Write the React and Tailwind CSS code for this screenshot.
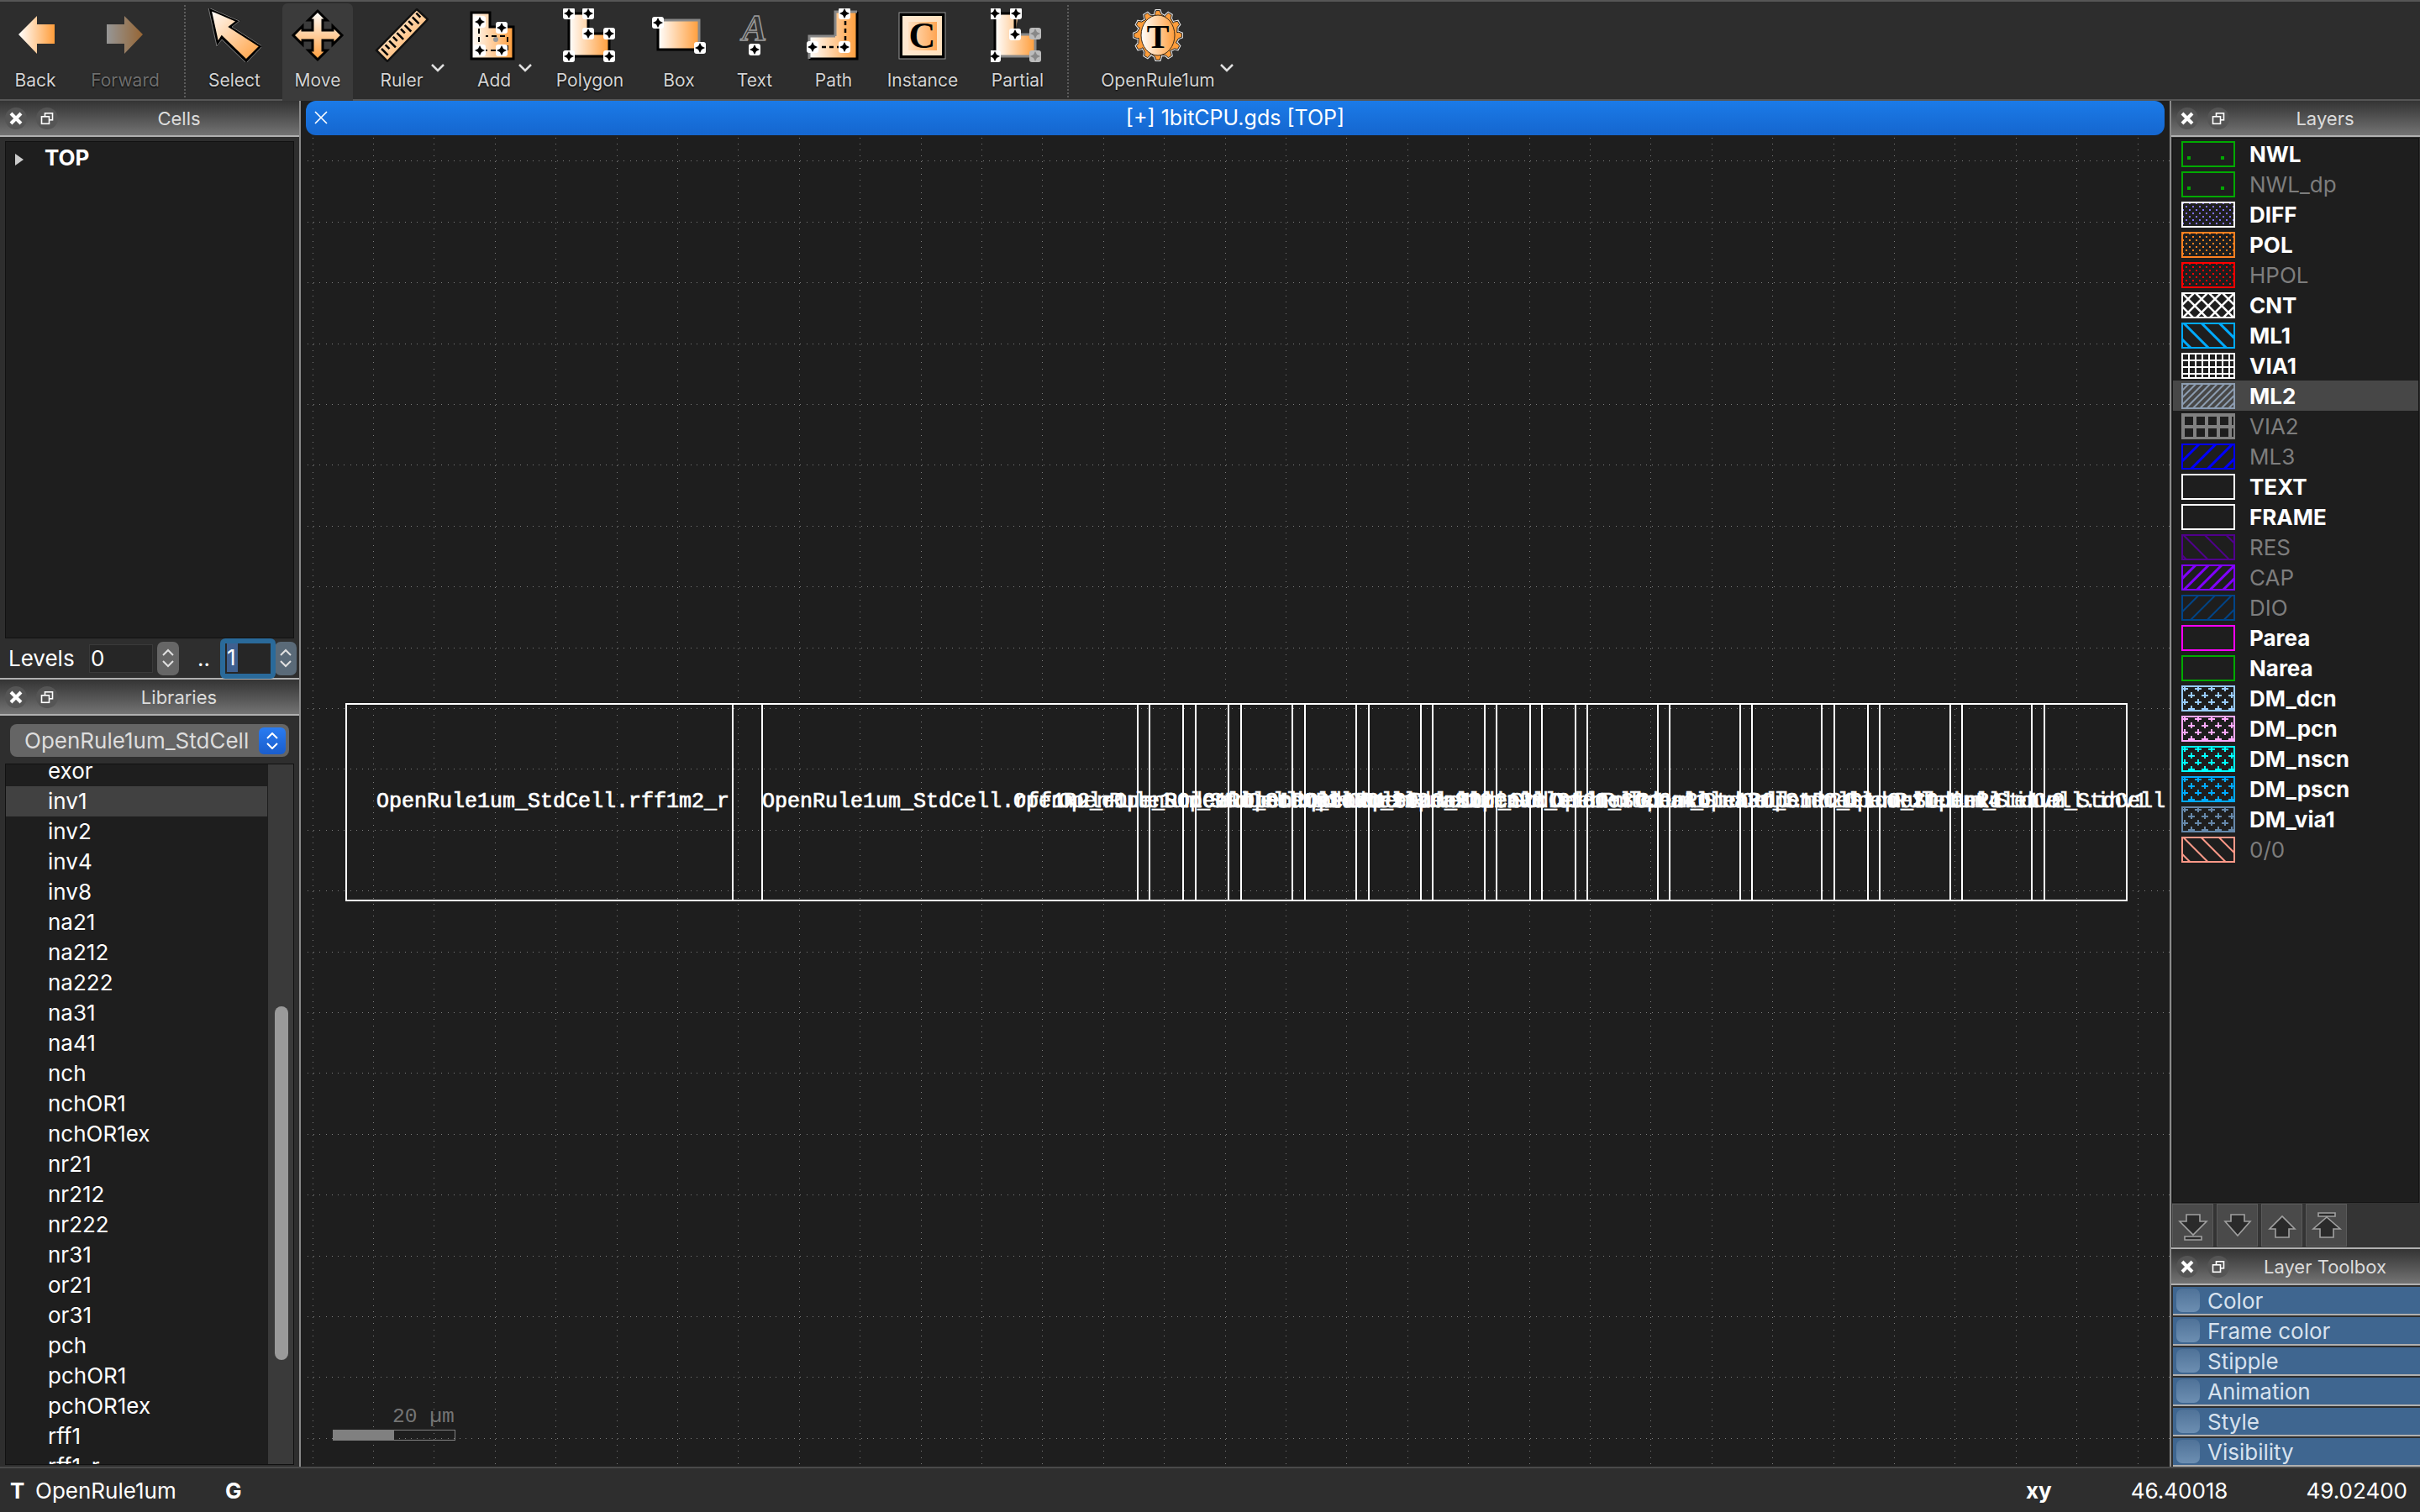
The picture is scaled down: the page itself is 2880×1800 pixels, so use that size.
import React from 'react';

const SANS = '[font-family:Inter,sans-serif]';

const tools = [
  { name: 'Back', w: 'w-[84px]', icon: 'back' },
  { name: 'Forward', w: 'w-[130px]', icon: 'forward', dim: true },
  { sep: 'mx-[5px]' },
  { name: 'Select', w: 'w-[106px]', icon: 'select' },
  { name: 'Move', w: 'w-[84px] ml-[4px]', icon: 'move', active: true },
  { name: 'Ruler', w: 'w-[116px]', icon: 'ruler', menu: true },
  { name: 'Add', w: 'w-[104px]', icon: 'add', menu: true },
  { name: 'Polygon', w: 'w-[124px]', icon: 'polygon' },
  { name: 'Box', w: 'w-[88px]', icon: 'box' },
  { name: 'Text', w: 'w-[92px]', icon: 'text' },
  { name: 'Path', w: 'w-[96px]', icon: 'path' },
  { name: 'Instance', w: 'w-[116px]', icon: 'instance' },
  { name: 'Partial', w: 'w-[110px]', icon: 'partial' },
  { sep: 'mx-[4px]' },
  { name: 'OpenRule1um', w: 'w-[204px]', icon: 'gear', menu: true, menuClass: 'right-[11px]' },
];

const cellNames = ['exor', 'inv1', 'inv2', 'inv4', 'inv8', 'na21', 'na212', 'na222', 'na31', 'na41', 'nch', 'nchOR1', 'nchOR1ex', 'nr21', 'nr212', 'nr222', 'nr31', 'or21', 'or31', 'pch', 'pchOR1', 'pchOR1ex', 'rff1', 'rff1_r'];

const layers = [
  { name: 'NWL', kind: 'corner', color: '#00aa00' },
  { name: 'NWL_dp', kind: 'corner', color: '#00aa00', dim: true },
  { name: 'DIFF', kind: 'dots', color: '#ffffff', fg: '#8070ff' },
  { name: 'POL', kind: 'dots', color: '#ff8020' },
  { name: 'HPOL', kind: 'dots', color: '#ff0000', dim: true },
  { name: 'CNT', kind: 'cross', color: '#ffffff' },
  { name: 'ML1', kind: 'down', color: '#00aaff', s: 15, t: 3 },
  { name: 'VIA1', kind: 'grid', color: '#ffffff', s: 8, t: 2 },
  { name: 'ML2', kind: 'up', color: '#8c9cb0', s: 6, t: 2, selected: true },
  { name: 'VIA2', kind: 'grid', color: '#808080', s: 14, t: 4, dim: true },
  { name: 'ML3', kind: 'up', color: '#0000ff', s: 14, t: 3, dim: true },
  { name: 'TEXT', kind: 'none', color: '#ffffff' },
  { name: 'FRAME', kind: 'none', color: '#ffffff' },
  { name: 'RES', kind: 'down', color: '#50008c', s: 18, t: 2, dim: true },
  { name: 'CAP', kind: 'up', color: '#8000ff', s: 11, t: 3, dim: true },
  { name: 'DIO', kind: 'up', color: '#004488', s: 14, t: 2, dim: true },
  { name: 'Parea', kind: 'none', color: '#ff00ff' },
  { name: 'Narea', kind: 'none', color: '#00aa00' },
  { name: 'DM_dcn', kind: 'plus', color: '#99ccff' },
  { name: 'DM_pcn', kind: 'plus', color: '#ffaaff' },
  { name: 'DM_nscn', kind: 'plus', color: '#00ffff' },
  { name: 'DM_pscn', kind: 'plus', color: '#00aaff' },
  { name: 'DM_via1', kind: 'plus', color: '#6688aa' },
  { name: '0/0', kind: 'down', color: '#ff9988', s: 15, t: 2, dim: true },
];

const toolbox = ['Color', 'Frame color', 'Stipple', 'Animation', 'Style', 'Visibility'];

// cell frames in the layout view, page coordinates
const cellEdges = [412, 872, 907, 1354, 1368, 1408, 1423, 1462, 1477, 1538, 1553, 1614, 1629, 1691, 1705, 1767, 1781, 1821, 1835, 1875, 1889, 1973, 1987, 2071, 2085, 2168, 2183, 2223, 2237, 2321, 2335, 2418, 2433, 2531];
const labels = [
  [448, 'rff1m2_r'], [907, 'rff1m2_r'], [1206, 'nchOR1ex'], [1260, 'pchOR1'], [1326, 'nr212'], [1401, 'na222'], [1478, 'inv8'],
  [1554, 'or31'], [1618, 'nr31'], [1673, 'na41'], [1749, 'na31'], [1847, 'nr21'], [1945, 'or21'], [2021, 'inv4'], [2097, 'inv2'], [2195, 'inv1'],
];

const gridDots = (() => {
  let d = '';
  const P = 72.4;
  for (let row = -9; row < 14; row++) {
    const y = Math.round(843 + row * P);
    for (let x = 366; x < 2582; x += P / 10) d += `M${Math.round(x)} ${y}h1v1h-1z`;
  }
  for (let col = -1; col < 30; col++) {
    const x = Math.round(444 + col * P);
    for (let y = 163.5; y < 1746; y += P / 10) d += `M${x} ${Math.round(y)}h1v1h-1z`;
  }
  return d;
})();

const gearPoints = (() => {
  const pts = [];
  for (let i = 0; i < 12; i++) {
    const a = (i / 12) * Math.PI * 2;
    const da = Math.PI / 12;
    [[-da * 0.55, 27], [-da * 0.3, 31], [da * 0.3, 31], [da * 0.55, 27], [da * 1.45, 25]].forEach(([o, r]) => {
      pts.push(`${(32 + Math.sin(a + o) * r * 0.92).toFixed(1)},${(32 - Math.cos(a + o) * r * 0.95).toFixed(1)}`);
    });
  }
  return pts.join(' ');
})();

const Handle = ({ x, y, gray }) => (
  <g transform={`translate(${x} ${y})`}>
    <rect x="-7" y="-7" width="14" height="14" rx="3" fill={gray ? '#bbbbbb' : '#ffffff'} />
    <path d="M0 -6 L2 -2 L6 0 L2 2 L0 6 L-2 2 L-6 0 L-2 -2 Z" fill={gray ? '#888888' : '#000000'} />
  </g>
);

const ToolIcon = ({ kind }) => {
  const base = { width: 64, height: 64, viewBox: '0 0 64 64' };
  switch (kind) {
    case 'back':
      return <svg {...base}><path d="M12 31 L34 9 L34 19 L55 19 L55 42 L34 42 L34 54 Z" fill="url(#toolH)" /></svg>;
    case 'forward':
      return <svg {...base} className="opacity-50"><path d="M53 31 L31 9 L31 19 L10 19 L10 42 L31 42 L31 54 Z" fill="url(#toolHR)" /></svg>;
    case 'select':
      return (
        <svg {...base}>
          <path d="M3 1 L36 15 L27 22 L63 45 L46 62 L17 34 L12 42 Z" fill="url(#toolD)" stroke="#000" strokeWidth="3" />
          <path d="M1 -1 L38 15 L29 22 L65 45 L46 65 L17 37 L11 45 Z" fill="none" stroke="#777" strokeWidth="1" />
        </svg>
      );
    case 'move':
      return (
        <svg {...base}>
          <path d="M32 3 L43 14 L38 14 L38 26 L50 26 L50 21 L61 32 L50 43 L50 38 L38 38 L38 50 L43 50 L32 61 L21 50 L26 50 L26 38 L14 38 L14 43 L3 32 L14 21 L14 26 L26 26 L26 14 L21 14 Z" fill="url(#toolV)" stroke="#000" strokeWidth="3" />
        </svg>
      );
    case 'ruler':
      return (
        <svg {...base}>
          <path d="M50 1 L63 13 L15 63 L2 50 Z" fill="url(#toolD)" stroke="#111" strokeWidth="2.5" />
          {[0, 1, 2, 3, 4, 5, 6, 7, 8, 9].map((i) => {
            const x = 8 + i * 4.6;
            const y = 48 - i * 4.7;
            const len = i % 2 ? 7 : 11;
            return <line key={i} x1={x} y1={y} x2={x + len * 0.7} y2={y + len * 0.7} stroke="#000" strokeWidth="2.5" />;
          })}
        </svg>
      );
    case 'add':
      return (
        <svg {...base}>
          <path d="M5 5 L27 5 L27 22 L55 22 L55 60 L5 60 Z" fill="url(#toolH)" stroke="#000" strokeWidth="3" />
          <path d="M14 14 L14 50 L48 50 L48 33 L22 33" fill="none" stroke="#000" strokeWidth="2" strokeDasharray="6 4" />
          <circle cx="34" cy="37" r="3" fill="#999" />
          <Handle x={15} y={16} />
          <Handle x={41} y={23} />
          <Handle x={15} y={50} />
          <Handle x={41} y={50} />
        </svg>
      );
    case 'polygon':
      return (
        <svg {...base}>
          <path d="M7 6 L30 6 L30 30 L55 30 L55 57 L7 57 Z" fill="url(#toolH)" stroke="#000" strokeWidth="3" />
          <Handle x={7} y={6} /><Handle x={30} y={6} /><Handle x={30} y={30} /><Handle x={55} y={30} /><Handle x={7} y={57} /><Handle x={55} y={57} />
        </svg>
      );
    case 'box':
      return (
        <svg {...base}>
          <rect x="7" y="14" width="49" height="35" fill="url(#toolH)" />
          <path d="M7 14 H56 V49" fill="none" stroke="#888" strokeWidth="3" />
          <path d="M7 14 V49 H56" fill="none" stroke="#000" strokeWidth="3" />
          <Handle x={7} y={17} /><Handle x={57} y={47} />
        </svg>
      );
    case 'text':
      return (
        <svg {...base}>
          <text x="32" y="38" textAnchor="middle" fontFamily="Liberation Serif, serif" fontStyle="italic" fontWeight="700" fontSize="44" fill="#333" stroke="#999" strokeWidth="1.5">A</text>
          <Handle x={32} y={49} />
        </svg>
      );
    case 'path':
      return (
        <svg {...base}>
          <path d="M34 4 L60 4 L60 60 L3 60 L3 33 L34 33 Z" fill="url(#toolH)" />
          <path d="M60 4 V60 H3" fill="none" stroke="#000" strokeWidth="3" />
          <path d="M34 33 V4 H60 M3 60 V33 H34" fill="none" stroke="#888" strokeWidth="3" />
          <path d="M46 6 V46 H7" fill="none" stroke="#000" strokeWidth="2.5" strokeDasharray="5 4" />
          <Handle x={45} y={6} /><Handle x={45} y={46} /><Handle x={7} y={46} />
        </svg>
      );
    case 'instance':
      return (
        <svg {...base}>
          <rect x="4" y="5" width="55" height="55" fill="#000" stroke="#999" strokeWidth="1" />
          <rect x="8" y="9" width="47" height="47" fill="url(#toolPale)" />
          <rect x="15" y="16" width="34" height="34" fill="url(#toolInner)" />
          <text x="31.5" y="47" textAnchor="middle" fontFamily="Liberation Serif, serif" fontWeight="700" fontSize="44" fill="#000">C</text>
        </svg>
      );
    case 'partial':
      return (
        <svg {...base}>
          <path d="M5 6 L33 6 L29 31 L53 31 L53 57 L5 57 Z" fill="url(#toolH)" />
          <path d="M5 57 V6 H29 V31" fill="none" stroke="#000" strokeWidth="3" />
          <path d="M29 31 H53 V57 H5" fill="none" stroke="#888" strokeWidth="3" />
          <Handle x={5} y={6} /><Handle x={30} y={6} /><Handle x={29} y={31} /><Handle x={53} y={30} gray /><Handle x={5} y={57} /><Handle x={53} y={57} gray />
        </svg>
      );
    case 'gear':
      return (
        <svg {...base}>
          <polygon points={gearPoints} fill="#ff9d3a" stroke="#e8e8e8" strokeWidth="3" />
          <polygon points={gearPoints} fill="#ff9d3a" stroke="#222" strokeWidth="1" />
          <ellipse cx="32" cy="32" rx="20" ry="24" fill="url(#toolH)" stroke="#3a2a1a" strokeWidth="1" />
          <text x="32" y="47" textAnchor="middle" fontFamily="Liberation Serif, serif" fontWeight="700" fontSize="40" fill="#000">T</text>
        </svg>
      );
    default:
      return null;
  }
};

const Chevron = ({ className }) => (
  <svg width="18" height="12" viewBox="0 0 18 12" className={className}>
    <path d="M2 2 L9 9 L16 2" fill="none" stroke="#e0e0e0" strokeWidth="2.5" />
  </svg>
);

const Tool = ({ tool }) => (
  <div className={`relative flex flex-col items-center h-[116px] pt-[6px] rounded-t-md ${tool.w} ${tool.active ? 'bg-[#3b3b3b]' : ''}`}>
    <ToolIcon kind={tool.icon} />
    <span
      className={`mt-[9px] text-[21px] leading-[26px] whitespace-nowrap [text-shadow:0_1px_2px_#000] ${tool.dim ? 'text-[#6e6e6e]' : 'text-[#d4d4d4]'}`}
    >
      {tool.name}
    </span>
    {tool.menu && <Chevron className={`absolute top-[71px] ${tool.menuClass || 'right-[6px]'}`} />}
  </div>
);

const Toolbar = () => (
  <div className="flex items-start h-[120px] pt-[2px] bg-[#2d2d2d] border-t-2 border-b-2 border-[#565656] shrink-0">
    {tools.map((t, i) =>
      t.sep ? (
        <div key={i} className={`w-0 h-[110px] mt-[2px] border-l-2 border-dotted border-[#5c5c5c] ${t.sep}`} />
      ) : (
        <Tool key={t.name} tool={t} />
      )
    )}
  </div>
);

const DockTitle = ({ title, className = '' }) => (
  <div className={`flex items-center h-[41px] bg-gradient-to-b from-[#343434] to-[#747474] border-b-2 border-[#b0b0b0] box-content shrink-0 ${className}`}>
    <div className="flex items-center gap-[11px] w-[70px] pl-[6px] shrink-0">
      <div className="flex items-center justify-center w-[26px] h-[26px] rounded-full bg-[#555]">
        <svg width="18" height="18" viewBox="0 0 18 18"><path d="M3 3 L15 15 M15 3 L3 15" stroke="#fff" strokeWidth="4" /></svg>
      </div>
      <div className="flex items-center justify-center w-[26px] h-[26px] rounded-full bg-[#555]">
        <svg width="16" height="16" viewBox="0 0 16 16" fill="none" stroke="#fff" strokeWidth="1.6">
          <rect x="5.5" y="1.8" width="9" height="8" />
          <rect x="1.5" y="5.8" width="9" height="8.5" fill="#555" />
        </svg>
      </div>
    </div>
    <div className="flex-1 pt-[2px] text-center text-[22px] text-[#dcdcdc]">{title}</div>
  </div>
);

const Stepper = ({ tint }) => (
  <div className={`flex flex-col items-center justify-center gap-[5px] w-[26px] h-[40px] rounded-[7px] shrink-0 ${tint ? 'bg-[#5a6a78]' : 'bg-[#666666]'}`}>
    <svg width="16" height="9" viewBox="0 0 16 9"><path d="M2 8 L8 2 L14 8" fill="none" stroke="#e0e0e0" strokeWidth="2" /></svg>
    <svg width="16" height="9" viewBox="0 0 16 9"><path d="M2 1 L8 7 L14 1" fill="none" stroke="#e0e0e0" strokeWidth="2" /></svg>
  </div>
);

const LeftPanel = () => (
  <div className="flex flex-col w-[356px] shrink-0 bg-[#2e2e2e]">
    <DockTitle title="Cells" />
    <div className="mx-[6px] mt-[5px] h-[592px] shrink-0 bg-[#1e1e1e] border border-[#111] flex items-start gap-[24px] pl-[10px] pt-[3px]">
      <svg width="12" height="14" viewBox="0 0 12 14" className="mt-[11px]"><path d="M1 0 L11 7 L1 14 Z" fill="#cccccc" /></svg>
      <span className="font-bold text-[26px] leading-[32px] text-white">TOP</span>
    </div>
    <div className="flex items-center h-[47px] shrink-0 pl-[10px] text-[26px] text-white">
      <span className="w-[96px]">Levels</span>
      <div className="w-[76px] h-[34px] pl-[1px] mr-[5px] bg-[#262626] border border-[#3a3a3a] leading-[32px]">0</div>
      <Stepper />
      <span className="w-[49px] pl-[22px]">..</span>
      <div className="w-[66px] h-[48px] -mr-[1px] p-[6px] rounded-[6px] bg-[#2a6a9a] relative z-10">
        <div className="h-full pl-[2px] bg-[#262626] leading-[34px]">
          <span className="inline-block w-[13px] bg-[#3f6090]">1</span>
        </div>
      </div>
      <Stepper tint />
    </div>
    <div className="h-[2px] bg-[#b0b0b0] shrink-0" />
    <DockTitle title="Libraries" />
    <div className="flex items-center justify-between mx-[12px] mt-[10px] h-[39px] shrink-0 rounded-[8px] bg-[#656565] pl-[17px] pr-[4px] text-[26px] text-[#dddddd]">
      <span>OpenRule1um_StdCell</span>
      <div className="flex flex-col items-center justify-center gap-[4px] w-[32px] h-[32px] rounded-[6px] bg-gradient-to-b from-[#2a7cf2] to-[#1a5dcc]">
        <svg width="16" height="8" viewBox="0 0 16 8"><path d="M2 7 L8 1 L14 7" fill="none" stroke="#fff" strokeWidth="2" /></svg>
        <svg width="16" height="8" viewBox="0 0 16 8"><path d="M2 1 L8 7 L14 1" fill="none" stroke="#fff" strokeWidth="2" /></svg>
      </div>
    </div>
    <div className="relative mx-[6px] mt-[8px] flex-1 min-h-0 mb-[2px] overflow-hidden bg-[#1e1e1e] border border-[#111]">
      <div className="-mt-[10px] mr-[31px]">
        {cellNames.map((name) => (
          <div key={name} className={`h-[36px] pl-[50px] text-[26px] leading-[36px] text-white ${name === 'inv1' ? 'bg-[#414141]' : ''}`}>{name}</div>
        ))}
      </div>
      <div className="absolute top-0 bottom-0 right-0 w-[30px] bg-[#3a3a3a]">
        <div className="absolute left-[8px] top-[288px] w-[16px] h-[421px] rounded-full bg-[#9a9a9a]" />
      </div>
    </div>
  </div>
);

const Swatch = ({ layer }) => {
  const id = `sw-${layer.name.replace('/', '-')}`;
  const { kind, color, s, t } = layer;
  const fg = layer.fg || color;
  return (
    <svg width="64" height="31" viewBox="0 0 64 31" shapeRendering="crispEdges" className="shrink-0">
      <defs>
        {kind === 'dots' && (
          <pattern id={id} width="8" height="8" patternUnits="userSpaceOnUse">
            <rect x="1" y="1" width="2" height="2" fill={fg} />
            <rect x="5" y="5" width="2" height="2" fill={fg} />
          </pattern>
        )}
        {kind === 'cross' && (
          <pattern id={id} width="16" height="16" patternUnits="userSpaceOnUse">
            <path d="M0 0 L16 16 M16 0 L0 16" stroke={fg} strokeWidth="2.5" shapeRendering="auto" />
          </pattern>
        )}
        {(kind === 'down' || kind === 'up') && (
          <pattern id={id} width={s} height={s} patternUnits="userSpaceOnUse" patternTransform={`rotate(${kind === 'down' ? -45 : 45})`}>
            <rect width={t} height={s} fill={fg} shapeRendering="auto" />
          </pattern>
        )}
        {kind === 'grid' && (
          <pattern id={id} width={s} height={s} patternUnits="userSpaceOnUse">
            <path d={`M0 ${t / 2} H${s} M${t / 2} 0 V${s}`} stroke={fg} strokeWidth={t} />
          </pattern>
        )}
        {kind === 'plus' && (
          <pattern id={id} width="16" height="16" patternUnits="userSpaceOnUse">
            <path d="M4 0 V7 M0 3.5 H8 M12 8 V15 M8 11.5 H16" stroke={fg} strokeWidth="2" />
          </pattern>
        )}
      </defs>
      {kind !== 'none' && kind !== 'corner' && <rect width="64" height="31" fill={`url(#${id})`} />}
      {kind === 'corner' && (
        <>
          <rect x="7" y="18" width="4" height="4" fill={color} />
          <rect x="47" y="18" width="4" height="4" fill={color} />
        </>
      )}
      <rect x="1" y="1" width="62" height="29" fill="none" stroke={color} strokeWidth="2" />
    </svg>
  );
};

const LayerRow = ({ layer }) => (
  <div className={`flex items-center h-[36px] pl-[10px] ${layer.selected ? 'bg-[#474747]' : ''}`}>
    <Swatch layer={layer} />
    <span className={`ml-[17px] text-[26px] ${layer.dim ? 'font-normal text-[#7d7d7d]' : 'font-bold text-white'}`}>{layer.name}</span>
  </div>
);

const arrowPaths = [
  'M15 10 H31 V18 H39 L23 34 L7 18 H15 Z M13 36 H33 V40 H13 Z',
  'M15 10 H31 V18 H38 L23 35 L8 18 H15 Z',
  'M15 37 H31 V27 H38 L23 12 L8 27 H15 Z',
  'M13 8 H33 V12 H13 Z M23 13 L39 27 H31 V37 H15 V27 H7 Z',
];

const RightPanel = () => (
  <div className="flex flex-col w-[296px] shrink-0 bg-[#2e2e2e]">
    <DockTitle title="Layers" />
    <div className="h-[1268px] ml-[1px] mr-[1px] mt-[1px] shrink-0 bg-[#1e1e1e] border border-[#141414] overflow-hidden">
      {layers.map((l) => <LayerRow key={l.name} layer={l} />)}
    </div>
    <div className="flex gap-[4px] h-[53px] shrink-0 pl-[1px] pt-[1px] bg-[#343434]">
      {arrowPaths.map((d) => (
        <div key={d} className="flex items-center justify-center w-[49px] h-[51px] bg-[#4a4a4a] border border-[#5a5a5a]">
          <svg width="46" height="46" viewBox="0 0 46 46"><path d={d} fill="#2a2a2a" stroke="#a0a0a0" strokeWidth="1.6" /></svg>
        </div>
      ))}
    </div>
    <div className="h-[2px] bg-[#b0b0b0] shrink-0" />
    <DockTitle title="Layer Toolbox" />
    <div className="flex-1 pt-[2px] pl-[2px]">
      {toolbox.map((item) => (
        <div key={item} className="flex items-center gap-[9px] h-[32px] mb-[4px] pl-[4px] bg-[#3f6690] shadow-[0_2px_0_#b0b0b0] text-[26px] text-[#d8e2ee]">
          <div className="w-[28px] h-[28px] rounded-[7px] bg-gradient-to-b from-[#4f7298] to-[#6d8fb2] shrink-0" />
          <span>{item}</span>
        </div>
      ))}
    </div>
  </div>
);

const LayoutCanvas = () => (
  <svg className="block flex-1 min-h-0 w-full" viewBox="358 161 2224 1585" preserveAspectRatio="xMinYMin slice">
    <path d={gridDots} fill="#7c7c7c" shapeRendering="crispEdges" />
    <g stroke="#ffffff" strokeWidth="2" fill="none" shapeRendering="crispEdges">
      <rect x="412" y="838" width="2119" height="234" />
      {cellEdges.slice(1, -1).map((x) => <line key={x} x1={x} x2={x} y1="838" y2="1072" />)}
    </g>
    <g fill="#ffffff" fontFamily="Liberation Mono, monospace" fontSize="25" stroke="#fff" strokeWidth="0.7">
      {labels.map(([x, suffix]) => <text key={x} x={x} y="961">{`OpenRule1um_StdCell.${suffix}`}</text>)}
      <text x="2292" y="961">OpenRule1um_StdCell</text>
    </g>
    <text x="467" y="1693" fontFamily="Liberation Mono, monospace" fontSize="24.6" fill="#747474">20 µm</text>
    <rect x="396.5" y="1702.5" width="145" height="12" fill="none" stroke="#808080" />
    <rect x="396" y="1702" width="73" height="13" fill="#808080" />
  </svg>
);

const Center = () => (
  <div className="flex flex-col flex-1 min-w-0 bg-[#1e1e1e]">
    <div className="relative flex items-center justify-center h-[41px] ml-[6px] mr-[6px] pt-[1px] rounded-[12px] bg-gradient-to-b from-[#1b7be8] to-[#1566cf] text-[25px] text-white shrink-0">
      <svg width="18" height="18" viewBox="0 0 18 18" className="absolute left-[9px] top-[11px]"><path d="M2 2 L16 16 M16 2 L2 16" stroke="#fff" strokeWidth="1.6" /></svg>
      <span>[+] 1bitCPU.gds [TOP]</span>
    </div>
    <LayoutCanvas />
  </div>
);

const StatusBar = () => (
  <div className="flex items-center h-[54px] shrink-0 bg-[#2e2e2e] border-t-2 border-[#4a4a4a] text-[26px] text-white">
    <span className="w-[42px] pl-[12px] font-bold">T</span>
    <span className="w-[226px]">OpenRule1um</span>
    <span className="font-bold">G</span>
    <span className="ml-auto font-bold">xy</span>
    <span className="ml-[94px]">46.40018</span>
    <span className="ml-[93px] mr-[15px]">49.02400</span>
  </div>
);

const Gradients = () => (
  <svg width="0" height="0" className="absolute">
    <defs>
      <linearGradient id="toolH" x1="0" y1="0" x2="1" y2="0"><stop offset="0" stopColor="#fff" /><stop offset="1" stopColor="#ff9d3a" /></linearGradient>
      <linearGradient id="toolHR" x1="0" y1="0" x2="1" y2="0"><stop offset="0" stopColor="#fff" /><stop offset="1" stopColor="#ff9d3a" /></linearGradient>
      <linearGradient id="toolV" x1="0" y1="0" x2="0" y2="1"><stop offset="0" stopColor="#fff" /><stop offset="1" stopColor="#ff9d3a" /></linearGradient>
      <linearGradient id="toolD" x1="0" y1="0" x2="1" y2="1"><stop offset="0" stopColor="#fff" /><stop offset="1" stopColor="#ff9d3a" /></linearGradient>
      <linearGradient id="toolPale" x1="0" y1="0" x2="1" y2="0"><stop offset="0" stopColor="#ffe9d2" /><stop offset="1" stopColor="#ffe0bd" /></linearGradient>
      <linearGradient id="toolInner" x1="0" y1="0" x2="1" y2="0"><stop offset="0" stopColor="#ffe0c0" /><stop offset="1" stopColor="#ffa552" /></linearGradient>
    </defs>
  </svg>
);

export default function App() {
  return (
    <div className={`flex flex-col w-[2880px] h-[1800px] overflow-hidden bg-[#2e2e2e] ${SANS}`}>
      <Gradients />
      <Toolbar />
      <div className="flex flex-1 min-h-0">
        <LeftPanel />
        <div className="w-[2px] bg-[#8a8a8a] shrink-0" />
        <Center />
        <div className="w-[2px] bg-[#8a8a8a] shrink-0" />
        <RightPanel />
      </div>
      <StatusBar />
    </div>
  );
}
